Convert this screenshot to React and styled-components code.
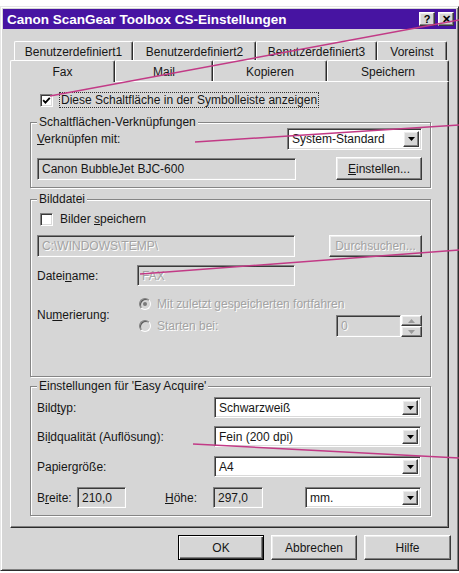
import React from "react";
import styled, { createGlobalStyle, css } from "styled-components";

const FACE = "#d6d6d6";
const INK = "#161616";

const Global = createGlobalStyle`
  html, body { margin: 0; padding: 0; background: #fff; }
  body {
    font-family: "Liberation Sans", Arial, sans-serif;
    font-size: 12px;
    color: ${INK};
  }
  * { box-sizing: border-box; }
`;

const Page = styled.div`
  position: relative;
  width: 459px;
  height: 573px;
  padding-top: 6px;
  overflow: hidden;
`;

const Window = styled.div`
  width: 459px;
  height: 565px;
  background: ${FACE};
  border: 1px solid;
  border-color: #e6e6e6 #2c2c2c #2c2c2c #e6e6e6;
  box-shadow: inset 1px 1px #fff, inset -1px -1px #808080;
  padding: 2px;
  display: flex;
  flex-direction: column;
`;

const TitleBar = styled.div`
  height: 20px;
  background: #4714a2;
  display: flex;
  align-items: center;
  padding: 0 2px 0 4px;
`;

const Title = styled.div`
  flex: 1;
  color: #fff;
  font-weight: bold;
  font-size: 13.5px;
  white-space: nowrap;
`;

const TitleButtons = styled.div`
  display: flex;
  gap: 3px;
`;

const raised = css`
  background: ${FACE};
  border: 1px solid;
  border-color: #fff #3a3a3a #3a3a3a #fff;
  box-shadow: inset -1px -1px #808080, inset 1px 1px #ececec;
`;

const sunken = css`
  border: 1px solid;
  border-color: #808080 #fff #fff #808080;
  box-shadow: inset 1px 1px #3a3a3a, inset -1px -1px #dadada;
`;

const CapButton = styled.div`
  ${raised};
  width: 16px;
  height: 14px;
  display: flex;
  align-items: center;
  justify-content: center;
  font-weight: bold;
  font-size: 11px;
  line-height: 1;
  color: #000;
`;

const Body = styled.div`
  flex: 1;
  display: flex;
  flex-direction: column;
  padding: 12px 5px 0 7px;
`;

const TabRow = styled.div`
  display: flex;
  height: ${(p) => p.$h}px;
  margin-left: ${(p) => p.$indent}px;
  margin-right: 2px;
`;

const Tab = styled.div`
  width: ${(p) => p.$w}px;
  display: flex;
  align-items: center;
  justify-content: center;
  padding-top: 1px;
  background: ${FACE};
  border-top: 1px solid #fff;
  border-left: 1px solid #fff;
  border-right: 1px solid #2c2c2c;
  box-shadow: inset -1px 0 #808080;
  border-radius: 2px 2px 0 0;
  white-space: nowrap;
  ${(p) =>
    p.$active &&
    css`
      position: relative;
      z-index: 1;
      margin-bottom: -1px;
    `}
`;

const Panel = styled.div`
  height: 447px;
  margin-right: 2px;
  border: 1px solid;
  border-color: #fff #2c2c2c #2c2c2c #fff;
  box-shadow: inset -1px -1px #808080;
  padding: 11px 17px 0 19px;
  display: flex;
  flex-direction: column;
`;

const CheckRow = styled.div`
  display: flex;
  align-items: center;
  gap: 7px;
  height: 14px;
  margin-left: ${(p) => p.$indent || 0}px;
`;

const CheckBox = styled.span`
  ${sunken};
  width: 13px;
  height: 13px;
  background: #fff;
  display: inline-flex;
  align-items: center;
  justify-content: center;
  flex: none;
`;

const Focus = styled.span`
  outline: 1px dotted #333;
  padding: 0 1px;
  line-height: 14px;
`;

const Group = styled.div`
  position: relative;
  height: ${(p) => p.$h}px;
  margin-top: ${(p) => p.$mt}px;
  border: 1px solid #858585;
  box-shadow: inset 1px 1px #fff, 1px 1px #fff;
  padding: ${(p) => p.$pt}px 8px 0 6px;
  display: flex;
  flex-direction: column;
`;

const Legend = styled.span`
  position: absolute;
  top: -8px;
  left: 6px;
  padding: 0 2px;
  background: ${FACE};
  line-height: 15px;
  white-space: nowrap;
`;

const Row = styled.div`
  display: flex;
  align-items: center;
  justify-content: ${(p) => p.$justify || "flex-start"};
  height: ${(p) => p.$h}px;
  margin-top: ${(p) => p.$mt || 0}px;
`;

const Label = styled.span`
  width: ${(p) => (p.$w ? `${p.$w}px` : "auto")};
  flex: none;
  white-space: nowrap;
  ${(p) =>
    p.$disabled &&
    css`
      color: #a3a3a3;
      text-shadow: 1px 1px 0 #fff;
    `}
`;

const Spacer = styled.span`
  width: ${(p) => p.$w}px;
  flex: none;
`;

const Field = styled.div`
  ${sunken};
  width: ${(p) => p.$w}px;
  height: ${(p) => p.$h || 22}px;
  flex: none;
  background: ${(p) => (p.$white ? "#fff" : FACE)};
  display: flex;
  align-items: center;
  padding: 0 4px;
  white-space: nowrap;
  overflow: hidden;
  ${(p) =>
    p.$disabled &&
    css`
      color: #a3a3a3;
      text-shadow: 1px 1px 0 #fff;
    `}
`;

const Combo = styled.div`
  ${sunken};
  width: ${(p) => p.$w}px;
  height: ${(p) => p.$h || 21}px;
  flex: none;
  background: #fff;
  display: flex;
  padding: 2px;
`;

const ComboText = styled.span`
  flex: 1;
  display: flex;
  align-items: center;
  padding-left: 2px;
  white-space: nowrap;
  overflow: hidden;
`;

const DropButton = styled.span`
  ${raised};
  width: 16px;
  display: flex;
  align-items: center;
  justify-content: center;
`;

const PushButton = styled.button`
  ${raised};
  width: ${(p) => p.$w}px;
  height: ${(p) => p.$h || 23}px;
  flex: none;
  font: inherit;
  color: ${INK};
  padding: 0;
  display: flex;
  align-items: center;
  justify-content: center;
  ${(p) =>
    p.$default &&
    css`
      border: 1px solid #000;
      box-shadow: inset 1px 1px #fff, inset -1px -1px #3a3a3a,
        inset -2px -2px #808080;
    `}
  ${(p) =>
    p.$disabled &&
    css`
      color: #a3a3a3;
      text-shadow: 1px 1px 0 #fff;
    `}
`;

const Radio = styled.span`
  width: 12px;
  height: 12px;
  flex: none;
  border-radius: 50%;
  border: 1px solid;
  border-color: #808080 #fff #fff #808080;
  box-shadow: inset 1px 1px #5a5a5a;
  background: ${FACE};
  display: inline-flex;
  align-items: center;
  justify-content: center;
`;

const RadioDot = styled.span`
  width: 4px;
  height: 4px;
  border-radius: 50%;
  background: #7a7a7a;
`;

const RadioLine = styled.div`
  display: flex;
  align-items: center;
  gap: 6px;
  margin-left: 2px;
`;

const NumGrid = styled.div`
  display: grid;
  grid-template-columns: 100px 1fr;
  grid-template-rows: 13px 22px;
  row-gap: 5px;
  margin-top: 11px;
`;

const NumLabel = styled(Label)`
  grid-row: 1 / span 2;
  align-self: start;
  margin-top: 11px;
`;

const SpinBox = styled.div`
  display: flex;
`;

const SpinButtons = styled.div`
  display: flex;
  flex-direction: column;
  width: 21px;
  height: 22px;
`;

const SpinButton = styled.span`
  ${raised};
  flex: 1;
  display: flex;
  align-items: center;
  justify-content: center;
`;

const Underline = styled.span`
  text-decoration: underline;
`;

const ButtonBar = styled.div`
  display: flex;
  justify-content: flex-end;
  gap: 7px;
  margin-top: 7px;
`;

const Callouts = styled.svg`
  position: absolute;
  top: 0;
  left: 0;
  pointer-events: none;
`;

const Arrow = ({ up, gray }) => (
  <svg width="7" height="4" viewBox="0 0 7 4">
    <polygon
      points={up ? "0,4 7,4 3.5,0" : "0,0 7,0 3.5,4"}
      fill={gray ? "#9a9a9a" : "#000"}
    />
  </svg>
);

const Select = ({ w, h, children }) => (
  <Combo $w={w} $h={h}>
    <ComboText>{children}</ComboText>
    <DropButton>
      <Arrow />
    </DropButton>
  </Combo>
);

const CheckMark = () => (
  <svg width="9" height="9" viewBox="0 0 9 9">
    <polyline
      points="1.2,4.2 3.4,6.6 7.8,1.8"
      fill="none"
      stroke="#000"
      strokeWidth="1.8"
    />
  </svg>
);

const backTabs = [
  ["Benutzerdefiniert1", 119],
  ["Benutzerdefiniert2", 123],
  ["Benutzerdefiniert3", 121],
  ["Voreinst", 70],
];

const frontTabs = [
  ["Fax", 105, true],
  ["Mail", 98],
  ["Kopieren", 114],
  ["Speichern", 122],
];

const leaderLines = [
  [50, 96, 459, 20],
  [195, 142, 459, 125],
  [140, 274, 459, 250],
  [193, 444, 459, 458],
];

export default function App() {
  return (
    <>
      <Global />
      <Page>
        <Window>
          <TitleBar>
            <Title>Canon ScanGear Toolbox CS-Einstellungen</Title>
            <TitleButtons>
              <CapButton>?</CapButton>
              <CapButton>✕</CapButton>
            </TitleButtons>
          </TitleBar>

          <Body>
            <TabRow $h={19} $indent={4}>
              {backTabs.map(([t, w]) => (
                <Tab key={t} $w={w}>
                  {t}
                </Tab>
              ))}
            </TabRow>
            <TabRow $h={21} $indent={0}>
              {frontTabs.map(([t, w, active]) => (
                <Tab key={t} $w={w} $active={active}>
                  {t}
                </Tab>
              ))}
            </TabRow>

            <Panel>
              <CheckRow $indent={10}>
                <CheckBox>
                  <CheckMark />
                </CheckBox>
                <Focus>Diese Schaltfläche in der Symbolleiste anzeigen</Focus>
              </CheckRow>

              <Group $h={66} $mt={15} $pt={5}>
                <Legend>Schaltflächen-Verknüpfungen</Legend>
                <Row $h={22} $justify="space-between">
                  <Label>
                    <Underline>V</Underline>erknüpfen mit:
                  </Label>
                  <Select w={135} h={22}>
                    System-Standard
                  </Select>
                </Row>
                <Row $h={23} $mt={7} $justify="space-between">
                  <Field $w={259}>Canon BubbleJet BJC-600</Field>
                  <PushButton $w={86}>
                    <Underline>E</Underline>instellen...
                  </PushButton>
                </Row>
              </Group>

              <Group $h={178} $mt={11} $pt={12}>
                <Legend>Bilddatei</Legend>
                <CheckRow $indent={3}>
                  <CheckBox />
                  <span>
                    Bilder <Underline>s</Underline>peichern
                  </span>
                </CheckRow>
                <Row $h={22} $mt={9} $justify="space-between">
                  <Field $w={258} $disabled>
                    C:\WINDOWS\TEMP\
                  </Field>
                  <PushButton $w={93} $h={22} $disabled>
                    Durchsuchen...
                  </PushButton>
                </Row>
                <Row $h={21} $mt={8}>
                  <Label $w={100}>
                    Datei<Underline>n</Underline>ame:
                  </Label>
                  <Field $w={158} $h={21} $disabled>
                    FAX
                  </Field>
                </Row>
                <NumGrid>
                  <NumLabel>
                    Nu<Underline>m</Underline>erierung:
                  </NumLabel>
                  <RadioLine>
                    <Radio>
                      <RadioDot />
                    </Radio>
                    <Label $disabled>Mit zuletzt gespeicherten fortfahren</Label>
                  </RadioLine>
                  <Row $h={22} $justify="space-between">
                    <RadioLine>
                      <Radio />
                      <Label $disabled>Starten bei:</Label>
                    </RadioLine>
                    <SpinBox>
                      <Field $w={65} $disabled>
                        0
                      </Field>
                      <SpinButtons>
                        <SpinButton>
                          <Arrow up gray />
                        </SpinButton>
                        <SpinButton>
                          <Arrow gray />
                        </SpinButton>
                      </SpinButtons>
                    </SpinBox>
                  </Row>
                </NumGrid>
              </Group>

              <Group $h={130} $mt={9} $pt={10}>
                <Legend>Einstellungen für 'Easy Acquire'</Legend>
                <Row $h={21}>
                  <Label $w={177}>
                    Bild<Underline>t</Underline>yp:
                  </Label>
                  <Select w={207}>Schwarzweiß</Select>
                </Row>
                <Row $h={21} $mt={8}>
                  <Label $w={177}>
                    Bi<Underline>l</Underline>dqualität (Auflösung):
                  </Label>
                  <Select w={207}>Fein (200 dpi)</Select>
                </Row>
                <Row $h={21} $mt={9}>
                  <Label $w={177}>
                    Papier<Underline>g</Underline>röße:
                  </Label>
                  <Select w={207}>A4</Select>
                </Row>
                <Row $h={21} $mt={10}>
                  <Label $w={40}>
                    B<Underline>r</Underline>eite:
                  </Label>
                  <Field $w={49} $h={21}>
                    210,0
                  </Field>
                  <Spacer $w={39} />
                  <Label $w={48}>
                    <Underline>H</Underline>öhe:
                  </Label>
                  <Field $w={50} $h={21}>
                    297,0
                  </Field>
                  <Spacer $w={42} />
                  <Select w={116}>mm.</Select>
                </Row>
              </Group>
            </Panel>

            <ButtonBar>
              <PushButton $w={86} $h={25} $default>
                OK
              </PushButton>
              <PushButton $w={86} $h={25}>
                Abbrechen
              </PushButton>
              <PushButton $w={87} $h={25}>
                Hilfe
              </PushButton>
            </ButtonBar>
          </Body>
        </Window>

        <Callouts width="459" height="573" viewBox="0 0 459 573">
          {leaderLines.map(([x1, y1, x2, y2], i) => (
            <line
              key={i}
              x1={x1}
              y1={y1}
              x2={x2}
              y2={y2}
              stroke="#c23a86"
              strokeWidth="1.5"
            />
          ))}
        </Callouts>
      </Page>
    </>
  );
}
